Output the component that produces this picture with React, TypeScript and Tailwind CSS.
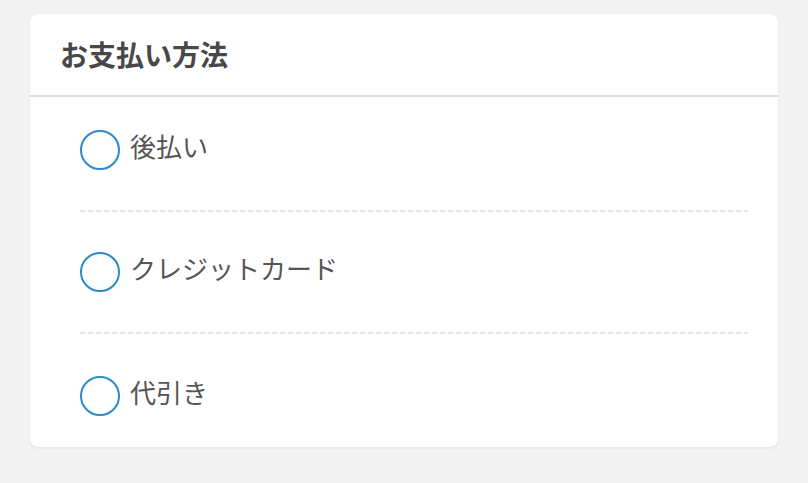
import React from "react";

const items = ["後払い", "クレジットカード", "代引き"];

function Radio() {
  return <span className="block w-[40px] h-[40px] shrink-0 rounded-full border-2 border-[#2a8bc9] bg-white" />;
}

export default function App() {
  const rows: React.ReactNode[] = [];
  items.forEach((label, i) => {
    if (i > 0)
      rows.push(
        <li
          key={"sep" + i}
          className="h-[2px] bg-[repeating-linear-gradient(90deg,#e6e6e6_0_5px,transparent_5px_8px)]"
        />
      );
    rows.push(
      <li
        key={label}
        className={
          i === 0 ? "pt-[33px] pb-[40px]" : i === 1 ? "pt-[40px] pb-[40px]" : "pt-[42px] pb-[31px]"
        }
      >
        <label className="flex items-center gap-[10px]">
          <Radio />
          <span className="-mt-[8px] text-[26px] leading-none text-[#555555]">{label}</span>
        </label>
      </li>
    );
  });
  return (
    <div
      className="min-h-[483px] w-full bg-[#f3f3f3] px-[30px] pt-[14px]"
      style={{ fontFamily: '"Noto Sans CJK JP", "Noto Sans", sans-serif' }}
    >
      <div className="rounded-[8px] bg-white shadow-[0_1px_3px_rgba(0,0,0,0.08)]">
        <div className="flex h-[83px] items-center border-b-2 border-[#dcdcdc] px-[30px]">
          <h2 className="-mt-[2px] text-[28px] font-bold leading-none text-[#484848]">お支払い方法</h2>
        </div>
        <ul className="pl-[50px] pr-[30px]">{rows}</ul>
      </div>
    </div>
  );
}
